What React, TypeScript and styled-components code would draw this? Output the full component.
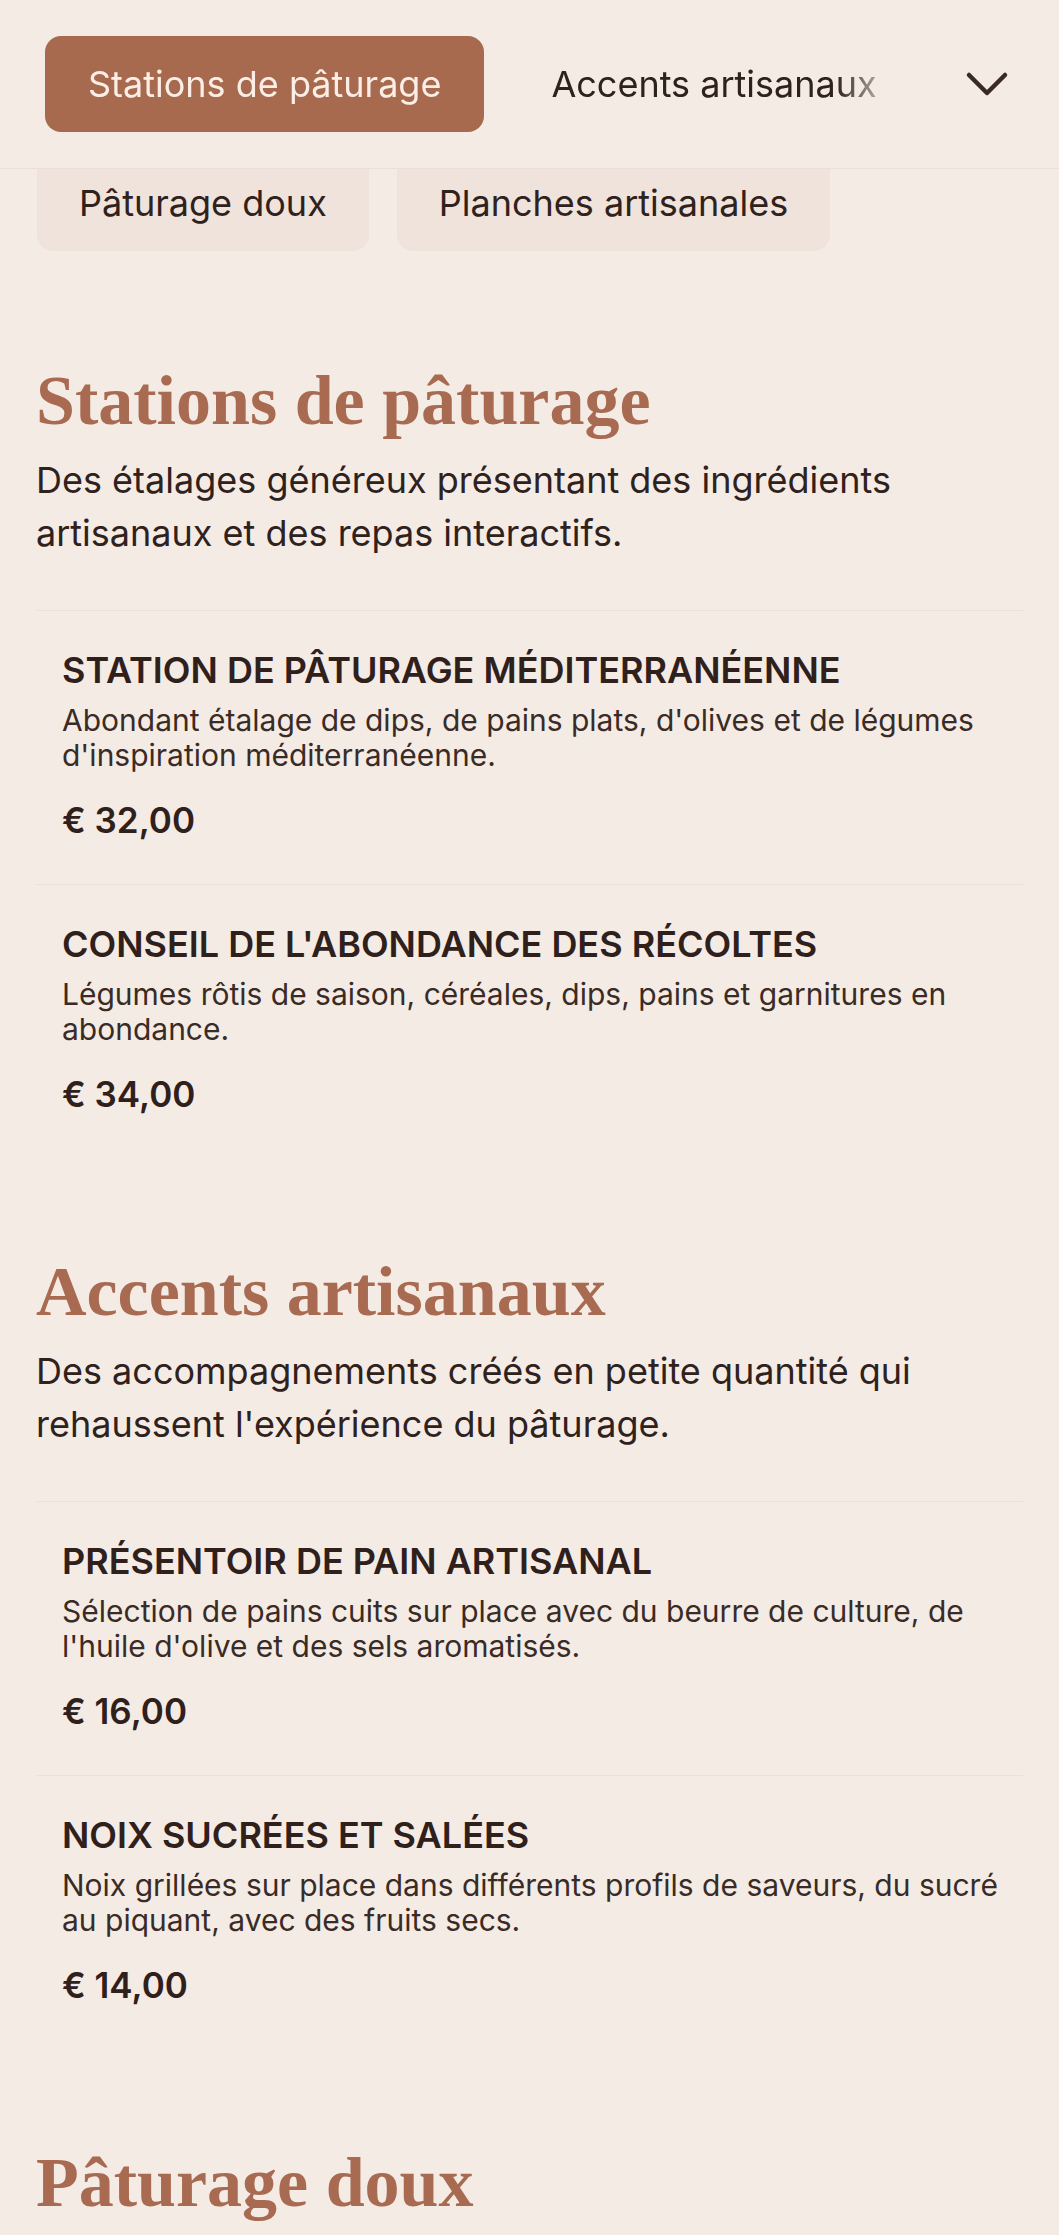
import React from 'react';
import styled, { createGlobalStyle } from 'styled-components';

const GlobalStyle = createGlobalStyle`
  html, body {
    margin: 0;
    padding: 0;
    background: #f4ebe5;
  }
  body {
    font-family: Inter, "Noto Sans", sans-serif;
    color: #2f211c;
  }
  * { box-sizing: border-box; }
`;

const Header = styled.header`
  display: flex;
  align-items: center;
  padding: 36px 32px 36px 45px;
  border-bottom: 1px solid #ebdfd7;
  background: #f4ebe5;
`;

const TabScroller = styled.nav`
  flex: 1;
  display: flex;
  gap: 24px;
  overflow: hidden;
  margin-right: 47px;
  mask-image: linear-gradient(to right, #000 calc(100% - 64px), transparent);
`;

const Tab = styled.button<{ $active?: boolean }>`
  flex: none;
  height: 96px;
  padding: 0 43px;
  border: none;
  border-radius: 16px;
  font-family: Inter, "Noto Sans", sans-serif;
  font-size: 36px;
  white-space: nowrap;
  background: ${(p) => (p.$active ? '#a76a4f' : 'transparent')};
  color: ${(p) => (p.$active ? '#fbeee6' : '#2f211c')};
`;

const ToggleButton = styled.button`
  flex: none;
  width: 80px;
  height: 96px;
  display: flex;
  align-items: center;
  justify-content: center;
  border: none;
  background: transparent;
  padding: 0;
`;

const OverflowRow = styled.div`
  display: flex;
  align-items: flex-end;
  gap: 28px;
  height: 82px;
  overflow: hidden;
  padding-left: 37px;
`;

const OverflowPill = styled.span`
  flex: none;
  height: 96px;
  display: flex;
  align-items: center;
  padding: 0 42px;
  border-radius: 16px;
  background: #f0e3dc;
  font-size: 36px;
  white-space: nowrap;
  color: #2f211c;
`;

const Main = styled.main`
  padding: 16px 36px 80px;
`;

const Section = styled.section`
  padding-top: 92px;
`;

const SectionTitle = styled.h2`
  margin: 0;
  font-family: "Liberation Serif", "DejaVu Serif", serif;
  font-weight: 700;
  font-size: 70px;
  line-height: 84px;
  color: #a86b52;
`;

const SectionIntro = styled.p`
  margin: 11px 0 0;
  font-size: 36px;
  line-height: 53px;
  color: #2f211c;
`;

const ItemList = styled.ul`
  list-style: none;
  margin: 50px 0 0;
  padding: 0;
`;

const Item = styled.li`
  border-top: 1px solid #ece0d8;
  padding: 38px 16px 42px 26px;
`;

const ItemName = styled.h3`
  margin: 0;
  font-size: 36px;
  line-height: 43px;
  font-weight: 600;
  color: #2f201b;
`;

const ItemText = styled.p`
  margin: 11px 0 0;
  font-size: 30px;
  line-height: 35px;
  color: #3a2b26;
`;

const Price = styled.div`
  margin-top: 25px;
  font-size: 35px;
  line-height: 44px;
  font-weight: 600;
  color: #2f201b;
`;

type MenuItem = { name: string; text: string; price: string };
type MenuSection = { title: string; intro: string; items: MenuItem[] };

const sections: MenuSection[] = [
  {
    title: 'Stations de pâturage',
    intro: 'Des étalages généreux présentant des ingrédients artisanaux et des repas interactifs.',
    items: [
      {
        name: 'STATION DE PÂTURAGE MÉDITERRANÉENNE',
        text: "Abondant étalage de dips, de pains plats, d'olives et de légumes d'inspiration méditerranéenne.",
        price: '€ 32,00',
      },
      {
        name: "CONSEIL DE L'ABONDANCE DES RÉCOLTES",
        text: 'Légumes rôtis de saison, céréales, dips, pains et garnitures en abondance.',
        price: '€ 34,00',
      },
    ],
  },
  {
    title: 'Accents artisanaux',
    intro: "Des accompagnements créés en petite quantité qui rehaussent l'expérience du pâturage.",
    items: [
      {
        name: 'PRÉSENTOIR DE PAIN ARTISANAL',
        text: "Sélection de pains cuits sur place avec du beurre de culture, de l'huile d'olive et des sels aromatisés.",
        price: '€ 16,00',
      },
      {
        name: 'NOIX SUCRÉES ET SALÉES',
        text: 'Noix grillées sur place dans différents profils de saveurs, du sucré au piquant, avec des fruits secs.',
        price: '€ 14,00',
      },
    ],
  },
  {
    title: 'Pâturage doux',
    intro: 'Des douceurs à partager pour terminer le repas en beauté.',
    items: [],
  },
];

const Chevron = () => (
  <svg width="44" height="26" viewBox="0 0 44 26" fill="none">
    <polyline
      points="4,4 22,22 40,4"
      stroke="#3a2a25"
      strokeWidth="4.5"
      strokeLinecap="round"
      strokeLinejoin="round"
    />
  </svg>
);

const App: React.FC = () => {
  return (
    <>
      <GlobalStyle />
      <Header>
        <TabScroller>
          <Tab $active>Stations de pâturage</Tab>
          <Tab>Accents artisanaux</Tab>
          <Tab>Pâturage doux</Tab>
        </TabScroller>
        <ToggleButton aria-label="Afficher toutes les catégories">
          <Chevron />
        </ToggleButton>
      </Header>
      <OverflowRow>
        <OverflowPill>Pâturage doux</OverflowPill>
        <OverflowPill>Planches artisanales</OverflowPill>
      </OverflowRow>
      <Main>
        {sections.map((s) => (
          <Section key={s.title}>
            <SectionTitle>{s.title}</SectionTitle>
            <SectionIntro>{s.intro}</SectionIntro>
            {s.items.length > 0 && (
              <ItemList>
                {s.items.map((it) => (
                  <Item key={it.name}>
                    <ItemName>{it.name}</ItemName>
                    <ItemText>{it.text}</ItemText>
                    <Price>{it.price}</Price>
                  </Item>
                ))}
              </ItemList>
            )}
          </Section>
        ))}
      </Main>
    </>
  );
};

export default App;
